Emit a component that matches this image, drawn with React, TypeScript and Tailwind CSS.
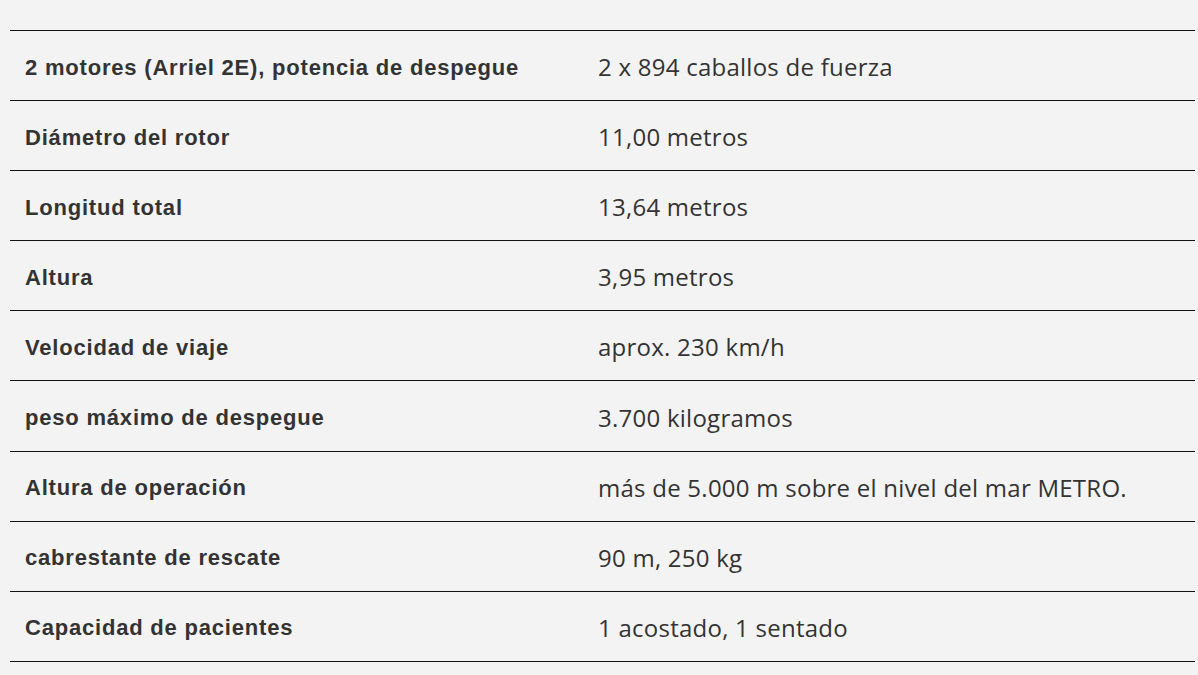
const specs = [
  ["2 motores (Arriel 2E), potencia de despegue", "2 x 894 caballos de fuerza"],
  ["Diámetro del rotor", "11,00 metros"],
  ["Longitud total", "13,64 metros"],
  ["Altura", "3,95 metros"],
  ["Velocidad de viaje", "aprox. 230 km/h"],
  ["peso máximo de despegue", "3.700 kilogramos"],
  ["Altura de operación", "más de 5.000 m sobre el nivel del mar METRO."],
  ["cabrestante de rescate", "90 m, 250 kg"],
  ["Capacidad de pacientes", "1 acostado, 1 sentado"],
];

export default function App() {
  return (
    <div className="min-h-[675px] w-[1198px] bg-[#f3f3f3] pt-[30px] pl-[10px] pr-[3px] text-[#333]">
      <div className="border-t border-[#111]">
        {specs.map(([label, value], i) => (
          <div
            key={i}
            className="grid h-[70.1px] grid-cols-[588px_1fr] items-center border-b border-[#111] pt-[3px]"
          >
            <div className="pl-[15px] font-['Liberation_Sans',sans-serif] text-[22px] font-bold tracking-[0.8px]">
              {label}
            </div>
            <div className="font-['Open_Sans',sans-serif] text-[24px] tracking-[0.25px]">{value}</div>
          </div>
        ))}
      </div>
    </div>
  );
}
